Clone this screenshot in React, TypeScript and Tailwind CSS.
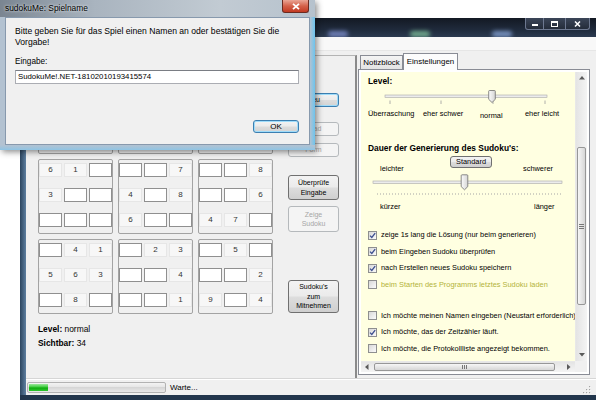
import React from "react";

const NORMAL_BTN =
  "border border-[#707070] rounded-[3px] bg-[linear-gradient(#f3f3f3,#ebebeb_48%,#dddddd_52%,#cfcfcf)] text-black";
const DISABLED_BTN =
  "border border-[#b5b9bc] rounded-[3px] bg-[#f4f4f4] text-[#a6a6a6]";
const DEFAULT_BTN =
  "border border-[#3c7fb1] rounded-[3px] bg-[linear-gradient(#f3f3f3,#ebebeb_48%,#dddddd_52%,#d3d3d3)] shadow-[inset_0_0_0_1px_#9fdcfa] text-black";

const BLOCKS: string[][] = [
  ["", "5", "", "9", "", "3", "", "", "2"],
  ["8", "", "", "", "1", "", "", "6", ""],
  ["", "", "4", "", "", "", "5", "", "1"],
  ["6", "1", "", "3", "", "", "", "", ""],
  ["", "", "7", "4", "", "8", "6", "", ""],
  ["", "", "8", "", "", "6", "4", "7", ""],
  ["", "4", "1", "5", "6", "3", "", "8", ""],
  ["", "2", "3", "", "", "4", "", "", "1"],
  ["", "5", "", "", "", "2", "9", "", "4"],
];

function Block({ cells }: { cells: string[] }) {
  return (
    <div className="w-[75px] h-[75px] border border-[#a3a3a3] rounded-[2px] pt-[3px]">
      <div className="grid grid-cols-[23px_23px_23px] gap-x-[2px] gap-y-[11px]">
        {cells.map((v, i) =>
          v ? (
            <div
              key={i}
              className="h-[14px] bg-[#f7f7f7] border border-[#e6e6e6] flex items-center justify-center text-[8px] leading-none text-[#333]"
            >
              {v}
            </div>
          ) : (
            <div key={i} className="h-[14px] bg-white border border-[#8f8f8f]" />
          )
        )}
      </div>
    </div>
  );
}

function Check({ checked }: { checked: boolean }) {
  return (
    <div className="w-[9px] h-[9px] shrink-0 border border-[#8e8f8f] bg-[linear-gradient(135deg,#d8d8d8,#fbfbfb)] flex items-center justify-center">
      {checked && (
        <svg width="7" height="7" viewBox="0 0 7 7">
          <path d="M1 3.6 L2.8 5.5 L6.2 1.2" fill="none" stroke="#3d4f8f" strokeWidth="1.3" />
        </svg>
      )}
    </div>
  );
}

function Tri({ dir }: { dir: "up" | "down" | "left" | "right" }) {
  const p = {
    up: "M0 3.5 L3 0 L6 3.5Z",
    down: "M0 0 L6 0 L3 3.5Z",
    left: "M3.5 0 L3.5 6 L0 3Z",
    right: "M0 0 L3.5 3 L0 6Z",
  }[dir];
  const vertical = dir === "up" || dir === "down";
  return (
    <svg width={vertical ? 6 : 3.5} height={vertical ? 3.5 : 6} viewBox={vertical ? "0 0 6 3.5" : "0 0 3.5 6"}>
      <path d={p} fill="#5a5a5a" />
    </svg>
  );
}

function CheckRow({ checked, text, olive }: { checked: boolean; text: string; olive?: boolean }) {
  return (
    <div className="h-[16.5px] flex items-center gap-[4px]">
      <Check checked={checked} />
      <span className={olive ? "text-[#b3b33a]" : "text-black"}>{text}</span>
    </div>
  );
}

function SliderThumbGrad({ id }: { id: string }) {
  return (
    <defs>
      <linearGradient id={id} x1="0" y1="0" x2="1" y2="0">
        <stop offset="0" stopColor="#fbfbfb" />
        <stop offset="1" stopColor="#d5d5d5" />
      </linearGradient>
    </defs>
  );
}

function TabContent() {
  return (
    <div className="flex-1 min-w-0 overflow-hidden bg-[#ffffe1] pl-[7px] pt-[4px] whitespace-nowrap text-[7.4px] leading-[10px]">
      <div className="font-bold text-[8.4px] leading-[10px]">Level:</div>
      <svg className="mt-[2px] block" width="200" height="18" viewBox="0 0 200 18">
        <SliderThumbGrad id="t1" />
        <rect x="17" y="7" width="162" height="2.4" fill="#ececec" stroke="#a8a8a8" strokeWidth="0.6" />
        {[22, 73, 125, 177].map((x) => (
          <line key={x} x1={x} x2={x} y1="12.5" y2="16" stroke="#9c9c9c" strokeWidth="0.8" />
        ))}
        <path d="M121.5 2.5 h5 a0.8 0.8 0 0 1 0.8 0.8 v8 l-3.3 3.2 l-3.3 -3.2 v-8 a0.8 0.8 0 0 1 0.8 -0.8z" fill="url(#t1)" stroke="#6e6e6e" strokeWidth="0.8" />
      </svg>
      <div className="mt-[3px] h-[12px] flex items-start text-[7.4px]">
        <div className="w-[55px]">Überraschung</div>
        <div className="w-[57px]">eher schwer</div>
        <div className="w-[45px] mt-[2px]">normal</div>
        <div>eher leicht</div>
      </div>
      <div className="mt-[22px] font-bold text-[8.4px] leading-[10px]">Dauer der Generierung des Sudoku's:</div>
      <div className="mt-[3px] h-[17px] flex items-start">
        <div className="w-[82px] pl-[12px] mt-[8px]">leichter</div>
        <div className={`${NORMAL_BTN} w-[42px] h-[12px] flex items-center justify-center text-[7.4px] leading-none`}>
          Standard
        </div>
        <div className="w-[31px]" />
        <div className="mt-[8px]">schwerer</div>
      </div>
      <svg className="block" width="200" height="25" viewBox="0 0 200 25">
        <SliderThumbGrad id="t2" />
        <rect x="5" y="8" width="189" height="2.4" fill="#ececec" stroke="#a8a8a8" strokeWidth="0.6" />
        <line x1="9" x2="193" y1="21" y2="21" stroke="#a5a5a5" strokeWidth="1" strokeDasharray="1 2" />
        <path d="M94 1.8 h5 a0.8 0.8 0 0 1 0.8 0.8 v11 l-3.3 3.2 l-3.3 -3.2 v-11 a0.8 0.8 0 0 1 0.8 -0.8z" fill="url(#t2)" stroke="#6e6e6e" strokeWidth="0.8" />
      </svg>
      <div className="mt-[4px] h-[10px] flex">
        <div className="w-[166px] pl-[12px]">kürzer</div>
        <div>länger</div>
      </div>
      <div className="mt-[15px]">
        <CheckRow checked text="zeige 1s lang die Lösung (nur beim generieren)" />
        <CheckRow checked text="beim Eingeben Sudoku überprüfen" />
        <CheckRow checked text="nach Erstellen neues Sudoku speichern" />
        <CheckRow checked={false} olive text="beim Starten des Programms letztes Sudoku laden" />
      </div>
      <div className="mt-[14.5px]">
        <CheckRow checked={false} text="Ich möchte meinen Namen eingeben (Neustart erforderlich)" />
        <CheckRow checked text="Ich möchte, das der Zeitzähler läuft." />
        <CheckRow checked={false} text="Ich möchte, die Protokollliste angezeigt bekommen." />
      </div>
    </div>
  );
}

function VScroll() {
  return (
    <div className="w-[12px] flex flex-col bg-[linear-gradient(90deg,#e4e4e4,#f4f4f4)] border-l border-[#e8e8e8]">
      <div className="h-[12px] flex items-center justify-center">
        <Tri dir="up" />
      </div>
      <div className="h-[63px]" />
      <div className="h-[158px] mx-[1px] rounded-[2px] border border-[#979797] bg-[linear-gradient(90deg,#f6f6f6,#e6e6e6_50%,#d6d6d6)] flex flex-col items-center justify-center gap-[1px]">
        <div className="w-[5px] h-[1px] bg-[#777]" />
        <div className="w-[5px] h-[1px] bg-[#777]" />
        <div className="w-[5px] h-[1px] bg-[#777]" />
      </div>
      <div className="flex-1" />
      <div className="h-[12px] flex items-center justify-center">
        <Tri dir="down" />
      </div>
    </div>
  );
}

function HScroll() {
  return (
    <div className="h-[11px] flex">
      <div className="flex-1 flex bg-[linear-gradient(#e4e4e4,#f4f4f4)] border-t border-[#e8e8e8]">
        <div className="w-[12px] flex items-center justify-center">
          <Tri dir="left" />
        </div>
        <div className="ml-[1px] w-[181px] my-[1px] rounded-[2px] border border-[#979797] bg-[linear-gradient(#f6f6f6,#e6e6e6_50%,#d6d6d6)] flex items-center justify-center gap-[1px]">
          <div className="w-[1px] h-[4px] bg-[#777]" />
          <div className="w-[1px] h-[4px] bg-[#777]" />
          <div className="w-[1px] h-[4px] bg-[#777]" />
        </div>
        <div className="flex-1" />
        <div className="w-[12px] flex items-center justify-center">
          <Tri dir="right" />
        </div>
      </div>
      <div className="w-[12px] bg-[#f0f0f0]" />
    </div>
  );
}

function TabControl() {
  return (
    <div className="ml-[1px] mt-[2px] w-[232px] h-[322px] flex flex-col">
      <div className="h-[16px] flex items-end text-[7.9px] leading-none">
        <div className="ml-[2px] w-[43px] h-[14px] border border-b-0 border-[#898c95] bg-[linear-gradient(#f4f4f4,#e3e3e3)] flex items-center justify-center">
          Notizblock
        </div>
        <div className="relative z-10 -mb-[1px] w-[55px] h-[17px] border border-b-0 border-[#898c95] bg-[#fcfcfc] flex items-center justify-center">
          Einstellungen
        </div>
      </div>
      <div className="h-[306px] border border-[#898c95] bg-white p-[2px] flex flex-col">
        <div className="flex-1 min-h-0 flex">
          <TabContent />
          <VScroll />
        </div>
        <HScroll />
      </div>
    </div>
  );
}

function LeftPanel() {
  return (
    <div className="w-[331px] pt-[4px] flex flex-col">
      <div className="flex-1 border-t border-r-2 border-t-[#b4b4b4] border-r-[#8a8a8a] pl-[12px] pt-[23px] flex items-start">
        <div className="flex flex-col">
          <div className="flex flex-col gap-[5px]">
            {[0, 1, 2].map((r) => (
              <div key={r} className="flex gap-[5px]">
                {[0, 1, 2].map((c) => (
                  <Block key={c} cells={BLOCKS[r * 3 + c]} />
                ))}
              </div>
            ))}
          </div>
          <div className="mt-[8px] text-[8.4px] leading-[14px]">
            <div>
              <span className="font-bold">Level:</span> normal
            </div>
            <div>
              <span className="font-bold">Sichtbar:</span> 34
            </div>
          </div>
        </div>
        <div className="ml-[15px] w-[51px] flex flex-col text-[7px] leading-[9.5px] text-center">
          <div className={`${DEFAULT_BTN} mt-[14px] h-[14px] flex items-center justify-center`}>Neu</div>
          <div className={`${DISABLED_BTN} mt-[15px] h-[14px] flex items-center justify-center`}>Load</div>
          <div className={`${DISABLED_BTN} mt-[7px] h-[14px] flex items-center justify-center`}>Form</div>
          <div className={`${NORMAL_BTN} mt-[18px] h-[25px] flex items-center justify-center`}>
            Überprüfe
            <br />
            Eingabe
          </div>
          <div className={`${DISABLED_BTN} mt-[6px] h-[26px] flex items-center justify-center`}>
            Zeige
            <br />
            Sudoku
          </div>
          <div className={`${NORMAL_BTN} mt-[48px] h-[33px] flex items-center justify-center`}>
            Sudoku's
            <br />
            zum
            <br />
            Mitnehmen
          </div>
        </div>
      </div>
    </div>
  );
}

function StatusBar() {
  return (
    <div className="h-[17px] border-t border-[#d6d6d6] shadow-[inset_0_1px_0_#ffffff] flex items-start pt-[3px] pl-[1px]">
      <div className="w-[139px] h-[11px] border border-[#b2b2b2] rounded-[2px] bg-[linear-gradient(#f3f3f3,#e4e4e4_50%,#d6d6d6_50%,#e8e8e8)] p-[1px] flex">
        <div className="w-[19px] h-full bg-[linear-gradient(#9be79b,#3acb3a_45%,#0ea80e_55%,#2fc62f)]" />
      </div>
      <div className="ml-[4px] text-[8px] leading-[11px]">Warte...</div>
      <div className="flex-1" />
      <svg className="mr-[6px] mt-[3px]" width="9" height="9" viewBox="0 0 9 9">
        {[
          [7, 1],
          [4, 4],
          [7, 4],
          [1, 7],
          [4, 7],
          [7, 7],
        ].map(([x, y], i) => (
          <g key={i}>
            <rect x={x + 0.6} y={y + 0.6} width="1.2" height="1.2" fill="#ffffff" />
            <rect x={x} y={y} width="1.2" height="1.2" fill="#a4a4a4" />
          </g>
        ))}
      </svg>
    </div>
  );
}

function MainWindow() {
  return (
    <div className="absolute left-[20px] top-[18px] w-[577px] h-[382px] flex flex-col">
      <div className="relative h-[19px] overflow-hidden bg-[linear-gradient(#131923,#1f2a3b_60%,#2b3a50)] flex justify-end pr-[7px]">
        <div className="absolute left-[308px] bottom-[0px] w-[20px] h-[6px] rounded-full bg-[#8fa0e8] blur-[2px] opacity-70" />
        <div className="absolute left-[390px] bottom-[0px] w-[20px] h-[6px] rounded-full bg-[#8fd8a8] blur-[2px] opacity-70" />
        <div className="absolute left-[472px] bottom-[0px] w-[20px] h-[6px] rounded-full bg-[#98b8f0] blur-[2px] opacity-70" />
        <div className="relative flex h-[12px] border border-t-0 border-[#6d7890] rounded-b-[3px] overflow-hidden bg-[linear-gradient(#3b4558,#242c3a)]">
          <div className="w-[18px] border-r border-[#6d7890] flex items-end justify-center pb-[3px]">
            <div className="w-[6px] h-[2px] bg-white" />
          </div>
          <div className="w-[22px] border-r border-[#6d7890] flex items-center justify-center">
            <div className="w-[7px] h-[6px] border border-white border-t-2" />
          </div>
          <div className="w-[23px] flex items-center justify-center">
            <svg width="7" height="6" viewBox="0 0 7 6">
              <path d="M1 0.5 L6 5.5 M6 0.5 L1 5.5" stroke="#ffffff" strokeWidth="1.5" />
            </svg>
          </div>
        </div>
      </div>
      <div className="flex flex-1 min-h-0">
        <div className="w-[6px] bg-[linear-gradient(90deg,#2d4660,#5e7fa0)]" />
        <div className="flex-1 min-w-0 flex flex-col bg-[#f0f0f0]">
          <div className="h-[14px] bg-[#f8f8f8] border-b border-[#e6e6e6]" />
          <div className="flex flex-1 min-h-0">
            <LeftPanel />
            <TabControl />
          </div>
          <StatusBar />
        </div>
      </div>
      <div className="h-[5px] bg-[#22364c]" />
    </div>
  );
}

function Dialog() {
  return (
    <div className="absolute left-0 top-0 w-[315px] h-[150px] flex flex-col bg-[#b3c2d1] shadow-[2px_2px_6px_rgba(0,0,0,0.45)]">
      <div className="h-[17px] flex items-start bg-[linear-gradient(90deg,#7a8591,#a9b4bf_30%,#c2cbd3_70%,#b6c2cd)]">
        <div className="pl-[5px] pt-[3px] text-[8.4px] leading-[10px] text-black [text-shadow:0_0_3px_#ffffff]">
          sudokuMe: Spielname
        </div>
        <div className="flex-1" />
        <div className="mr-[6px] w-[27px] h-[13px] rounded-b-[3px] border border-t-0 border-[#6b2a20] bg-[linear-gradient(#eaa595,#d4614a_50%,#c23a22)] flex items-center justify-center">
          <svg width="8" height="7" viewBox="0 0 8 7">
            <path d="M1 0.8 L7 6.2 M7 0.8 L1 6.2" stroke="#ffffff" strokeWidth="1.8" />
          </svg>
        </div>
      </div>
      <div className="flex flex-1 min-h-0">
        <div className="w-[5px]" />
        <div className="w-[305px] bg-[#f0f0f0] border border-[#8799ad] pl-[9px] pt-[8px] flex flex-col">
          <div className="text-[8.6px] leading-[11px]">
            Bitte geben Sie für das Spiel einen Namen an oder bestätigen Sie die
            <br />
            Vorgabe!
          </div>
          <div className="mt-[9px] text-[8.2px] leading-[10px]">Eingabe:</div>
          <div className="mt-[3px] w-[284px] h-[14px] border border-[#abadb3] border-t-[#7a7d84] bg-white pl-[2px] text-[7.8px] leading-[12px]">
            SudokuMe!.NET-18102010193415574
          </div>
          <div className={`${DEFAULT_BTN} self-end mr-[10px] mt-[36px] w-[46px] h-[13px] flex items-center justify-center text-[8px] leading-none`}>
            OK
          </div>
        </div>
        <div className="flex-1 bg-[linear-gradient(90deg,#b3c2d1,#6cc4ee)]" />
      </div>
      <div className="h-[5px] bg-[linear-gradient(#b3c2d1,#8fc4e4)]" />
    </div>
  );
}

export default function App() {
  return (
    <div className="relative w-[596px] h-[400px] overflow-hidden bg-white font-['Liberation_Sans',Arial,sans-serif] text-black">
      <MainWindow />
      <Dialog />
    </div>
  );
}
